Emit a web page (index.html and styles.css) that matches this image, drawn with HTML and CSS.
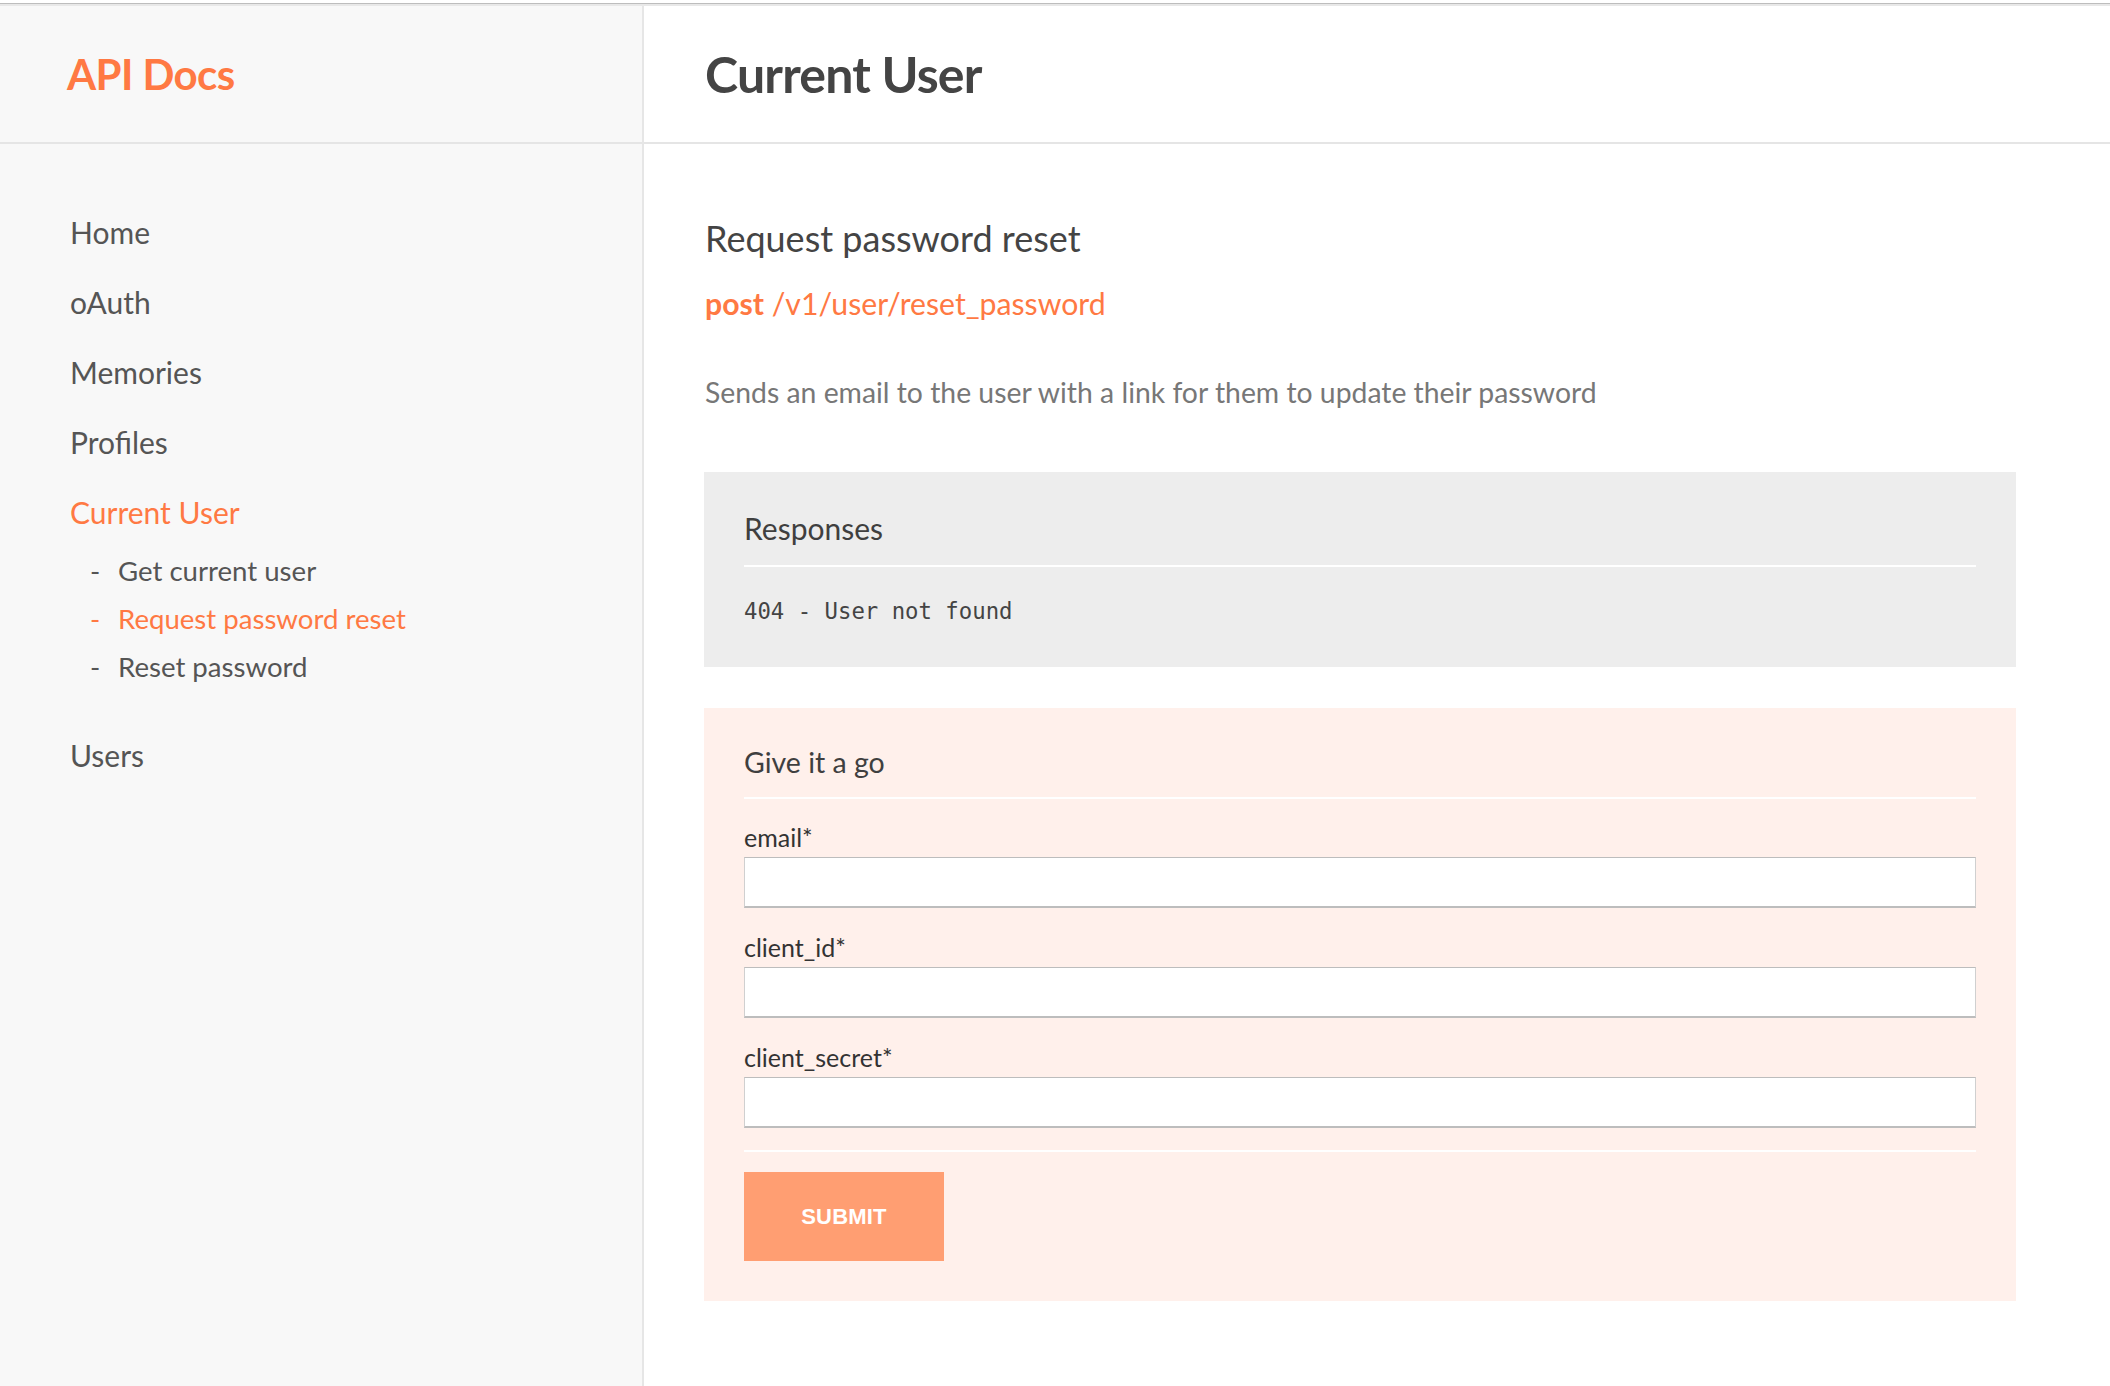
FILE: index.html
```html
<!DOCTYPE html>
<html lang="en">
<head>
<meta charset="utf-8">
<title>API Docs - Current User</title>
<link rel="stylesheet" href="styles.css">
</head>
<body>
<div class="topline"></div>
<div class="layout">
  <aside class="sidebar">
    <div class="brand">API Docs</div>
    <nav class="nav">
      <a class="nav-item">Home</a>
      <a class="nav-item">oAuth</a>
      <a class="nav-item">Memories</a>
      <a class="nav-item">Profiles</a>
      <a class="nav-item active">Current User</a>
      <ul class="subnav">
        <li class="sub-item"><span class="dash">-</span>Get current user</li>
        <li class="sub-item active"><span class="dash">-</span>Request password reset</li>
        <li class="sub-item"><span class="dash">-</span>Reset password</li>
      </ul>
      <a class="nav-item">Users</a>
    </nav>
  </aside>
  <main class="main">
    <header class="page-header"><h1 class="page-title">Current User</h1></header>
    <section class="content">
      <h2 class="endpoint-title">Request password reset</h2>
      <div class="endpoint"><span class="method">post</span> /v1/user/reset_password</div>
      <p class="description">Sends an email to the user with a link for them to update their password</p>

      <div class="panel responses">
        <div class="panel-title responses-title">Responses</div>
        <div class="divider"></div>
        <div class="response-line">404 - User not found</div>
      </div>

      <form class="panel tryit">
        <div class="panel-title">Give it a go</div>
        <div class="divider"></div>
        <div class="fields">
          <label class="field-label">email*</label>
          <input class="field-input" type="text">
          <label class="field-label">client_id*</label>
          <input class="field-input" type="text">
          <label class="field-label">client_secret*</label>
          <input class="field-input" type="text">
        </div>
        <div class="divider bottom"></div>
        <button class="submit" type="button">SUBMIT</button>
      </form>
    </section>
  </main>
</div>
</body>
</html>
```
FILE: styles.css
```css
* { box-sizing: border-box; }
html, body { margin: 0; padding: 0; }
body {
  font-family: Lato, "Open Sans", "Liberation Sans", sans-serif;
  background: #ffffff;
  color: #444;
  width: 2110px;
  min-height: 1386px;
}
.topline {
  height: 4px;
  border-bottom: 1px solid #bdbdbd;
  background: #fff;
}
.layout {
  display: grid;
  grid-template-columns: 644px 1fr;
  min-height: 1382px;
  border-top: 2px solid #e8e8e8;
}
.sidebar {
  background: #f8f8f8;
  border-right: 2px solid #e6e6e6;
}
.brand {
  height: 138px;
  border-bottom: 2px solid #e5e5e5;
  display: flex;
  align-items: center;
  padding-left: 67px;
  font-size: 42px;
  font-weight: 700;
  letter-spacing: -0.6px;
  color: #ff7943;
}
.nav {
  display: flex;
  flex-direction: column;
  padding: 68px 0 0 70px;
}
.nav-item {
  font-size: 30px;
  line-height: 40px;
  color: #555;
  margin-bottom: 30px;
}
.nav-item.active { color: #ff7943; margin-bottom: 19px; }
.subnav {
  list-style: none;
  margin: 0 0 48px 0;
  padding: 0 0 0 20px;
  display: flex;
  flex-direction: column;
  gap: 8px;
}
.sub-item {
  font-size: 27.6px;
  line-height: 40px;
  color: #555;
  display: flex;
}
.sub-item .dash { width: 28px; }
.sub-item.active { color: #ff7943; }

.main { display: flex; flex-direction: column; }
.page-header {
  height: 138px;
  border-bottom: 2px solid #e5e5e5;
  display: flex;
  align-items: center;
  padding-left: 61px;
}
.page-title {
  margin: 0;
  font-size: 50px;
  font-weight: 700;
  letter-spacing: -0.8px;
  color: #444;
}
.content {
  padding: 70px 94px 40px 60px;
  display: flex;
  flex-direction: column;
}
.endpoint-title {
  margin: 0 0 0 1px;
  font-size: 36px;
  line-height: 48px;
  font-weight: 400;
  color: #444;
}
.endpoint {
  margin: 21px 0 0 1px;
  font-size: 30.2px;
  line-height: 40px;
  color: #ff7943;
}
.method { font-weight: 700; }
.description {
  margin: 49px 0 0 1px;
  font-size: 28.35px;
  line-height: 40px;
  color: #777;
}
.panel {
  padding: 37px 40px 40px 40px;
}
.responses {
  margin-top: 60px;
  background: #ededed;
}
.panel-title {
  font-size: 28.5px;
  line-height: 40px;
  color: #3f3f3f;
}
.responses-title { font-size: 30px; line-height: 38px; }
.divider {
  height: 2px;
  background: #ffffff;
  margin-top: 18px;
}
.response-line {
  margin-top: 28px;
  font-family: "DejaVu Sans Mono", "Liberation Mono", monospace;
  font-size: 22.3px;
  line-height: 32px;
  color: #444;
}
.tryit {
  margin-top: 41px;
  background: #fff0eb;
  padding-top: 34px;
  display: flex;
  flex-direction: column;
  align-items: stretch;
}
.tryit .divider { margin-top: 15px; }
.fields {
  display: flex;
  flex-direction: column;
  padding-top: 22px;
}
.field-label {
  font-size: 25px;
  line-height: 32px;
  color: #333;
  margin-bottom: 4px;
}
.field-input {
  height: 51px;
  border: 1px solid #bdbdbd;
  border-left-color: #d0d0d0;
  border-right-color: #d0d0d0;
  border-bottom-width: 2px;
  background: #fff;
  margin: 0 0 23px 0;
  font-size: 24px;
  padding: 0 12px;
}
.field-input:last-child { margin-bottom: 0; }
.tryit .divider.bottom { margin-top: 22px; }
.submit {
  margin-top: 20px;
  align-self: flex-start;
  width: 200px;
  height: 89px;
  border: none;
  background: #ff9e72;
  color: #fff;
  font-family: "Liberation Sans", Arial, sans-serif;
  font-weight: 700;
  font-size: 22px;
  letter-spacing: 0.2px;
}
```
